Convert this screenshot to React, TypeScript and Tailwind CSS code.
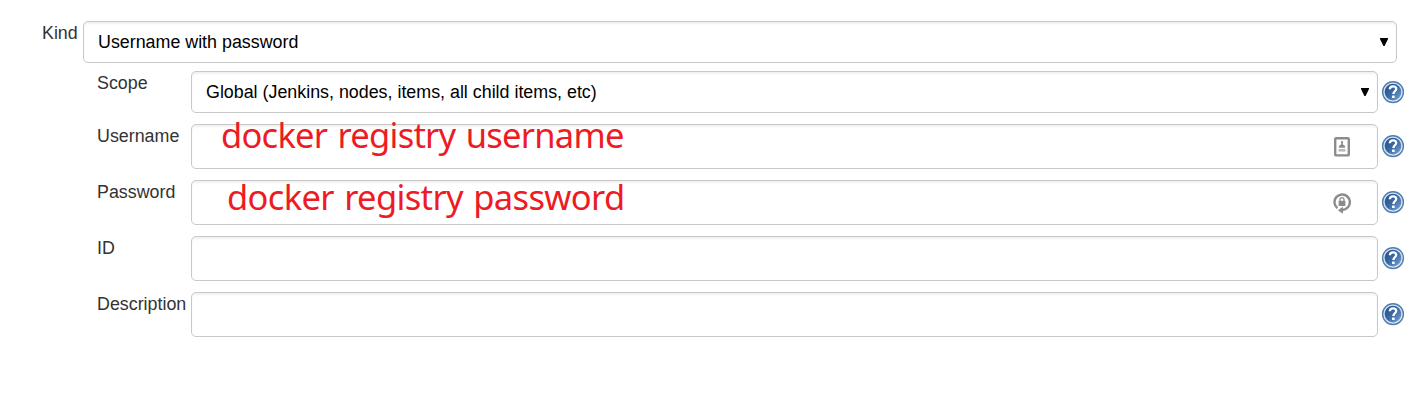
import type { ReactNode } from "react";

const fieldBox =
  "relative rounded-[5px] border border-[#c8c8c8] bg-white shadow-[inset_0_2px_2px_rgba(0,0,0,0.06)]";

function HelpIcon() {
  return (
    <svg className="mb-px ml-[3px] h-6 w-6 shrink-0" viewBox="0 0 24 24" aria-label="Help">
      <defs>
        <linearGradient id="help-fill" x1="0" y1="0" x2="1" y2="1">
          <stop offset="0" stopColor="#1f4c8c" />
          <stop offset="0.5" stopColor="#3a6ba5" />
          <stop offset="1" stopColor="#7fa9d3" />
        </linearGradient>
      </defs>
      <circle cx="12" cy="12.1" r="10.4" fill="#dbe6f2" stroke="#4f7eb0" strokeWidth="1.4" />
      <circle cx="12" cy="12.1" r="8.4" fill="url(#help-fill)" />
      <path
        d="M8.8 9.2C8.9 7.1 10.1 6.3 12 6.3c1.9 0 3.2 1 3.2 2.6 0 2.3-2.8 2.4-2.8 5"
        fill="none"
        stroke="#fff"
        strokeWidth="2.3"
      />
      <rect x="11" y="15.4" width="2.7" height="2.5" rx="0.5" fill="#fff" />
    </svg>
  );
}

function Arrow() {
  return (
    <svg className="mr-[8px] mb-px h-[8px] w-[8px]" viewBox="0 0 8 8">
      <path d="M0 0h8v1L4.6 8H3.4L0 1z" fill="#000" />
    </svg>
  );
}

function ContactIcon() {
  return (
    <svg className="mr-[26px] h-[22px] w-[18px]" viewBox="0 0 18 22">
      <rect x="2.2" y="2.2" width="13.6" height="17.2" rx="1" fill="#fff" stroke="#8c8c8c" strokeWidth="2.4" />
      <rect x="8" y="5" width="2" height="4" fill="#999" />
      <path d="M5.8 11.8c0-2.2 1.2-3.4 3.2-3.4s3.2 1.2 3.2 3.4z" fill="#8c8c8c" />
      <rect x="5.5" y="13" width="7" height="2.6" fill="#bbb" />
    </svg>
  );
}

function LockIcon() {
  return (
    <svg className="mr-[26px] h-[22px] w-[18px]" viewBox="0 0 18 22">
      <path d="M4.4 16.2A7.7 7.7 0 1 1 14.6 15.6Q12.6 18 9 18.2" fill="none" stroke="#8c8c8c" strokeWidth="2.4" />
      <path d="M10 14.8v6.9l-5.2-3.4z" fill="#8c8c8c" />
      <rect x="5.6" y="8.8" width="6.8" height="5.2" fill="#8c8c8c" />
      <path d="M7 9V7.7a2 2 0 0 1 4 0V9" fill="none" stroke="#999" strokeWidth="1.4" />
    </svg>
  );
}

function Select({ children }: { children: ReactNode }) {
  return (
    <div className={`${fieldBox} flex h-[42px] min-w-0 flex-1 items-center justify-between pl-[14px] text-black`}>
      <span>{children}</span>
      <Arrow />
    </div>
  );
}

function Row({ label, children }: { label: string; children: ReactNode }) {
  return (
    <div className="flex items-center">
      <div className="w-[94px] shrink-0 self-start whitespace-nowrap leading-6">{label}</div>
      {children}
      <HelpIcon />
    </div>
  );
}

function Input({ note, icon }: { note?: ReactNode; icon?: ReactNode }) {
  return (
    <div className={`${fieldBox} flex h-[45px] min-w-0 flex-1 items-center justify-end`}>
      {note}
      {icon}
    </div>
  );
}

const noteText =
  "absolute whitespace-nowrap font-['Noto_Sans','Open_Sans',sans-serif] text-[34.5px] leading-[48px] text-[#ed1c24] [word-spacing:2px]";

export default function App() {
  return (
    <main className="h-[402px] w-[1418px] bg-white pt-[21px] font-['Liberation_Sans',Arial,sans-serif] text-[17.85px] text-[#333]">
      <div className="flex pr-[21px] pl-[42px]">
        <div className="w-[41px] shrink-0 leading-6">Kind</div>
        <Select>Username with password</Select>
      </div>
      <div className="mt-2 flex flex-col gap-[11px] pr-[13px] pl-[97px]">
        <Row label="Scope">
          <Select>Global (Jenkins, nodes, items, all child items, etc)</Select>
        </Row>
        <Row label="Username">
          <Input
            note={
              <span className={`${noteText} top-[-14px] left-[29px] tracking-[-0.75px]`}>docker registry username</span>
            }
            icon={<ContactIcon />}
          />
        </Row>
        <Row label="Password">
          <Input
            note={
              <span className={`${noteText} top-[-8px] left-[35px] tracking-[-0.65px]`}>docker registry password</span>
            }
            icon={<LockIcon />}
          />
        </Row>
        <Row label="ID">
          <Input />
        </Row>
        <Row label="Description">
          <Input />
        </Row>
      </div>
    </main>
  );
}
